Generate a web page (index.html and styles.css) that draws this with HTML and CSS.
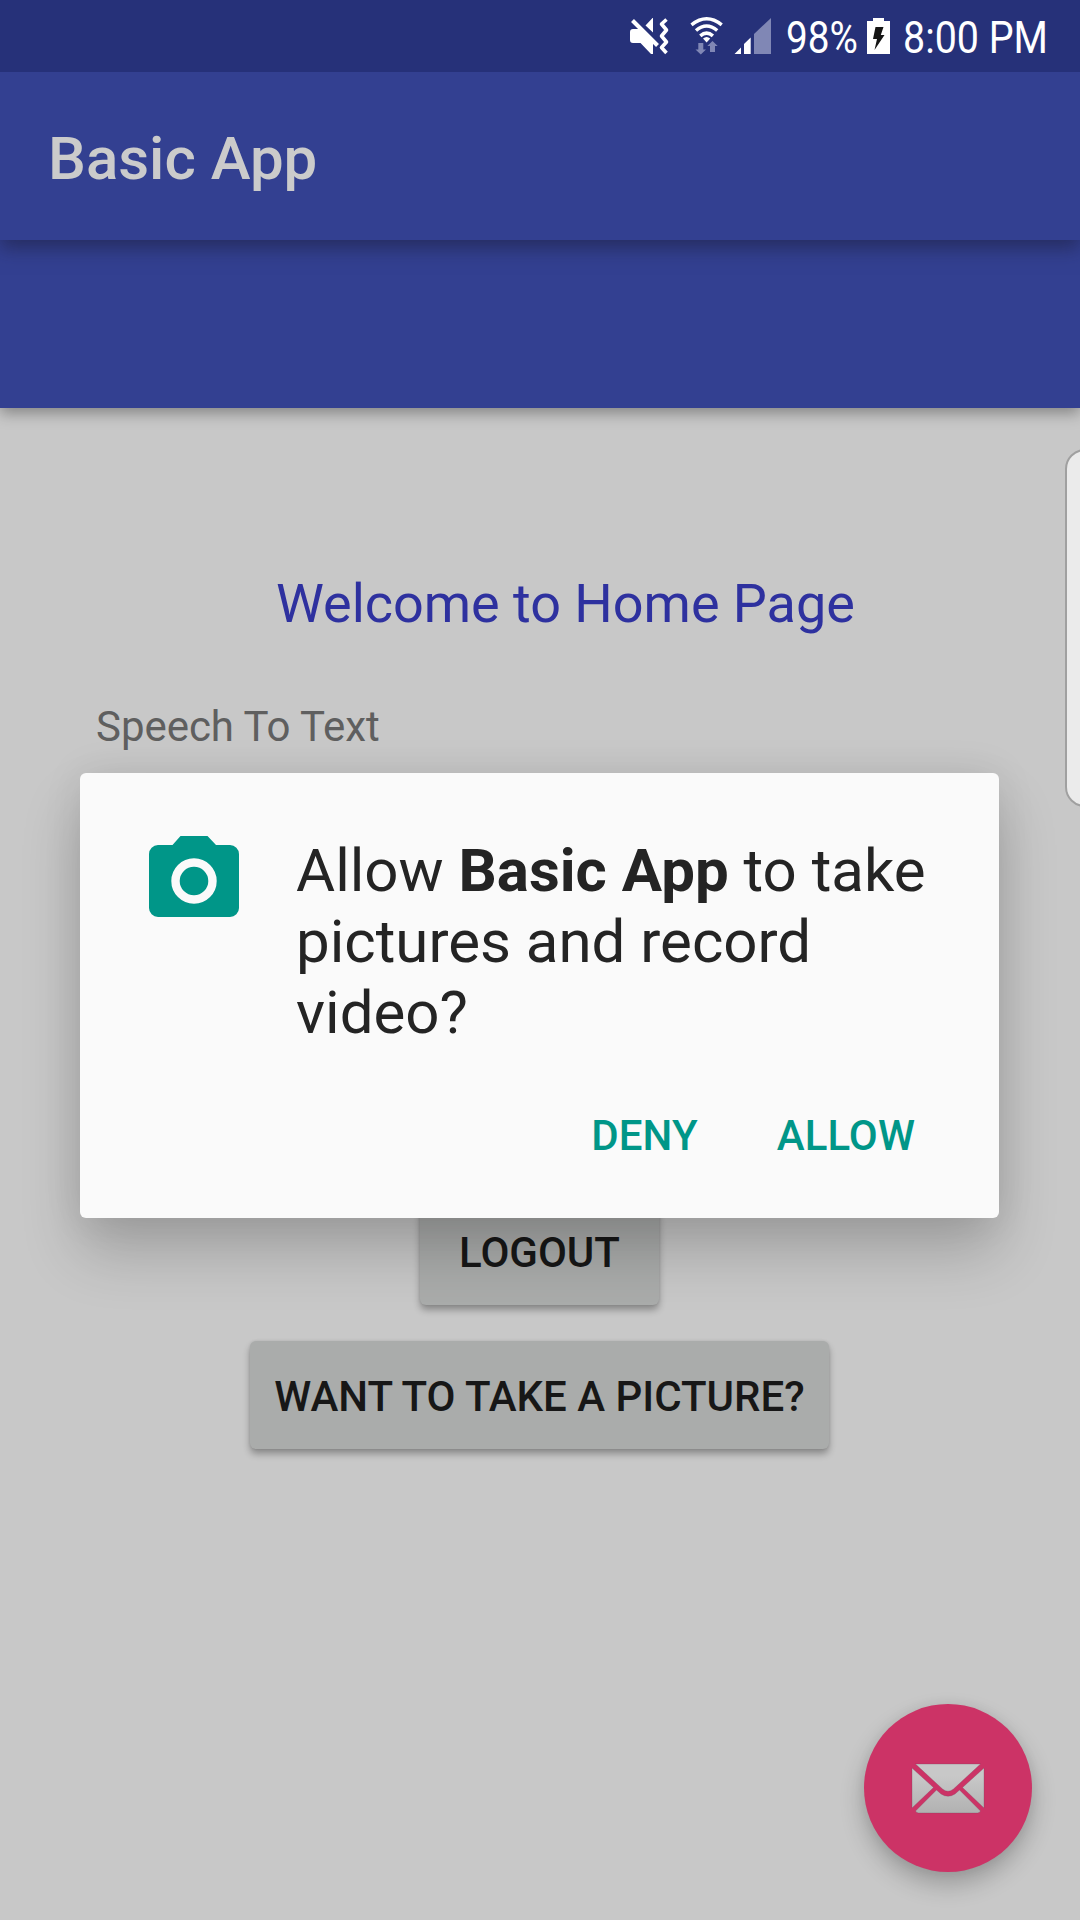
FILE: index.html
```html
<!DOCTYPE html>
<html lang="en">
<head>
<meta charset="utf-8">
<title>Basic App</title>
<link rel="stylesheet" href="styles.css">
</head>
<body>
<div class="screen">
  <header class="status">
    <svg class="status-icons" width="170" height="72" viewBox="0 0 170 72" aria-hidden="true">
      <path fill="#fff" d="M7 29h8l12 12v13h-2L14.500 43H7a3 3 0 0 1-3-3v-8a3 3 0 0 1 3-3zM19.500 25.500l7-7.500h.5v14.500z"/>
      <path stroke="#fff" stroke-width="4" fill="none" d="M6.500 20.500L31.500 45.500"/>
      <path stroke="#fff" stroke-width="3.600" fill="none" stroke-linejoin="round" d="M40.500 19.500L35.500 24 40.500 30 35.500 36 40.500 42 35.500 47.500 40.500 53"/>
      <g stroke="#fff" fill="none" stroke-width="3.500">
        <path d="M65.500 24.800q15.200-12 30.200 0"/>
        <path d="M70 30.500q10.600-9 21.200 0"/>
        <path d="M74.300 35.800q6.300-5.400 12.600 0"/>
      </g>
      <path fill="#fff" d="M77 38.500q3.600-3.200 7.200 0L80.600 42.500z"/>
      <path fill="#8087b5" d="M72.300 43h5v6.500h2.700L74.800 54.500 69.500 49.500h2.800zM84 52v-6h-2.700l5.200-5 5.200 5H89v6z"/>
      <path fill="#fff" d="M108.500 54l6.500-6.500V54zM118 54V44l6.700-6.500V54z"/>
      <path fill="#8087b5" d="M128 54V34l17-16V54z"/>
    </svg>
    <span class="battery-text">98%</span>
    <svg class="battery" width="24" height="37" viewBox="0 0 24 37" aria-hidden="true">
      <path fill="#fff" d="M0 3h6V0h11v3h6v33H0z"/>
      <path fill="#151515" d="M8.500 9h8L13.800 17h3.700L7.500 32 10 21H6z"/>
    </svg>
    <span class="clock">8:00 PM</span>
  </header>
  <div class="toolbar toolbar-main"><h1 class="app-title">Basic App</h1></div>
  <div class="toolbar toolbar-sub"></div>
  <main class="content">
    <h2 class="welcome">Welcome to Home Page</h2>
    <p class="speech">Speech To Text</p>
    <div class="actions">
      <button class="btn btn-logout">LOGOUT</button>
      <button class="btn btn-picture">WANT TO TAKE A PICTURE?</button>
    </div>
  </main>
  <div class="edge-panel"></div>
  <button class="fab" aria-label="Email">
    <svg class="mail" width="74" height="52" viewBox="0 0 74 52" aria-hidden="true">
      <defs>
        <linearGradient id="paper" x1="0" y1="0" x2="0" y2="52" gradientUnits="userSpaceOnUse">
          <stop offset="0.250" stop-color="#c8c8c8"/><stop offset="1" stop-color="#b0b0b0"/>
        </linearGradient>
      </defs>
      <g fill="url(#paper)" stroke="#70405a" stroke-opacity=".35" stroke-width=".8">
        <path d="M4.500 1h65L42.500 26q-5.500 4.500-11 0z"/>
        <path d="M1 5l21.500 19.500L1 45z"/>
        <path d="M73 5L51.500 24.500 73 45z"/>
        <path d="M25.500 27l4.500 4q7 4.500 14 0l4.500-4L69.500 48q-1 2-3 2h-59q-2 0-3-2z"/>
      </g>
    </svg>
  </button>
  <section class="dialog" role="dialog">
    <div class="dialog-body">
      <svg class="camera" width="90" height="81" viewBox="0 0 90 81" aria-hidden="true">
        <path fill="#009688" d="M31.500 0h27L67 9h14a9 9 0 0 1 9 9v54a9 9 0 0 1-9 9H9a9 9 0 0 1-9-9V18a9 9 0 0 1 9-9h14.500z"/>
        <circle cx="45" cy="45" r="18.500" fill="none" stroke="#fafafa" stroke-width="8.400"/>
      </svg>
      <p class="message">Allow <b>Basic App</b> to take<br>pictures and record<br>video?</p>
    </div>
    <div class="dialog-actions">
      <button class="text-btn">DENY</button>
      <button class="text-btn">ALLOW</button>
    </div>
  </section>
</div>
</body>
</html>
```
FILE: styles.css
```css
* { box-sizing: border-box; margin: 0; padding: 0; }
body { font-family: Roboto, sans-serif; }
button { border: 0; background: none; font: inherit; }
svg { display: block; flex: none; }

.screen {
  position: relative;
  width: 1080px;
  height: 1920px;
  overflow: hidden;
  background: #c8c8c8;
  display: flex;
  flex-direction: column;
}

.status {
  position: relative;
  z-index: 3;
  height: 72px;
  flex: none;
  display: flex;
  align-items: flex-start;
  padding-left: 626px;
  background: #263179;
  color: #fff;
  font-size: 45px;
  line-height: 75px;
  white-space: nowrap;
}
.battery-text, .clock { transform-origin: 0 50%; }
.battery-text { width: 71px; margin-left: -10px; transform: scaleX(.86); }
.battery { margin: 18px 0 0 10px; }
.clock { margin-left: 12px; transform: scaleX(.875); }

.toolbar { height: 168px; flex: none; position: relative; background: #334091; }
.toolbar-main { z-index: 2; box-shadow: 0 8px 18px rgba(25, 25, 50, .5); padding: 5px 48px 0; display: flex; align-items: center; }
.toolbar-sub { z-index: 1; box-shadow: 0 5px 14px rgba(0, 0, 0, .34); }
.app-title { font-size: 60px; font-weight: 500; color: #cbcbcb; }

.content { flex: 1; display: flex; flex-direction: column; padding-top: 164px; }
.welcome { font-size: 54px; font-weight: 400; line-height: 64px; letter-spacing: -.03px; color: #2e319f; padding-left: 276px; }
.speech { margin-top: 66px; padding-left: 96px; font-size: 42px; line-height: 50px; letter-spacing: -.04px; color: #5f5f5f; }
.actions { display: flex; flex-direction: column; align-items: center; gap: 36px; margin-top: 445px; padding-right: 1px; }
.btn {
  height: 108px;
  padding-top: 3px;
  border-radius: 6px;
  background: #aaacab;
  color: #171717;
  font-size: 42px;
  font-weight: 500;
  box-shadow: 0 5px 7px rgba(0, 0, 0, .3), 0 0 3px rgba(0, 0, 0, .1);
}
.btn-logout { width: 239px; }
.btn-picture { width: 579px; }

.edge-panel {
  position: absolute;
  left: 1065px;
  top: 449px;
  width: 40px;
  height: 358px;
  border: 2px solid #a0a0a0;
  border-radius: 20px;
  background: #ebebeb;
}

.fab {
  position: absolute;
  left: 864px;
  top: 1704px;
  width: 168px;
  height: 168px;
  border-radius: 50%;
  background: #cc3366;
  box-shadow: 0 12px 24px rgba(0, 0, 0, .24), 0 0 12px rgba(0, 0, 0, .06);
  display: flex;
  align-items: center;
  justify-content: center;
}
.mail { margin-top: 2px; }

.dialog {
  position: absolute;
  left: 80px;
  top: 773px;
  width: 919px;
  height: 445px;
  padding: 63px 72px 0 69px;
  border-radius: 6px;
  background: #fafafa;
  box-shadow: 0 34px 60px rgba(0, 0, 0, .2), 0 0 40px rgba(0, 0, 0, .08);
}
.dialog-body { display: flex; gap: 57px; }
.message { margin-top: -1px; font-size: 60px; line-height: 71px; color: #242424; white-space: nowrap; }
.dialog-actions { display: flex; justify-content: flex-end; gap: 79px; padding-right: 12px; margin-top: 63px; }
.text-btn { color: #009688; font-size: 42px; font-weight: 500; line-height: 50px; letter-spacing: .1px; }
```
